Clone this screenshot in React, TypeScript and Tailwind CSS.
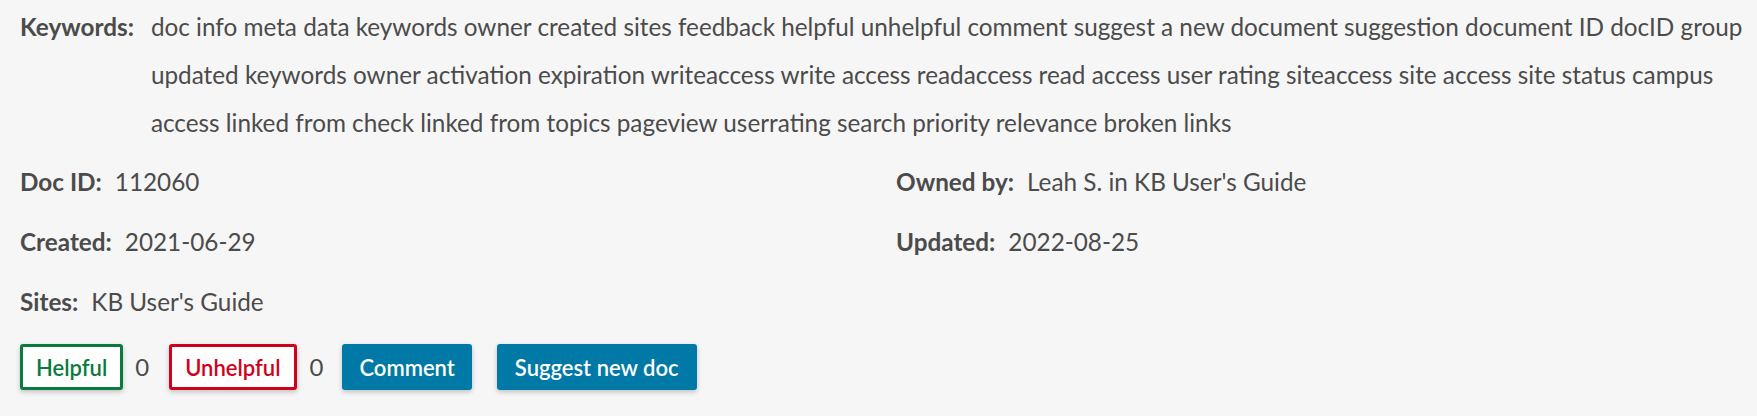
import React from "react";

const font = { fontFamily: "Lato, 'Open Sans', sans-serif" };

function Field({ label, value }: { label: string; value: string }) {
  return (
    <div className="flex items-center gap-[13px] h-[60px]">
      <span className="font-bold">{label}</span>
      <span>{value}</span>
    </div>
  );
}

const shadow = "shadow-[0_2px_5px_rgba(0,0,0,0.22)]";

export default function App() {
  return (
    <div
      className="w-[1757px] h-[416px] bg-[#f6f6f6] text-[24.3px] text-[#4b4b4b] pl-[20px] pr-[12px] pt-[3px]"
      style={font}
    >
      <div className="flex gap-[17px] leading-[48px]">
        <span className="font-bold whitespace-nowrap">Keywords:</span>
        <span>
          doc info meta data keywords owner created sites feedback helpful unhelpful comment suggest a new document suggestion document ID docID group updated keywords owner activation expiration writeaccess write access readaccess read access user rating siteaccess site access site status campus access linked from check linked from topics pageview userrating search priority relevance broken links
        </span>
      </div>
      <div className="grid grid-cols-2 gap-x-[27px] mt-[5px]">
        <Field label="Doc ID:" value="112060" />
        <Field label="Owned by:" value="Leah S. in KB User's Guide" />
        <Field label="Created:" value="2021-06-29" />
        <Field label="Updated:" value="2022-08-25" />
        <Field label="Sites:" value="KB User's Guide" />
      </div>
      <div className="flex items-center mt-[12px] text-[22px]">
        <button className={`h-[46px] px-[13px] bg-white border-[3px] border-[#0b7a3e] text-[#0b7a3e] rounded-[3px] ${shadow} font-semibold`}>
          Helpful
        </button>
        <span className="ml-[12px] text-[24px]">0</span>
        <button className={`ml-[20px] h-[46px] px-[13px] bg-white border-[3px] border-[#d0021b] text-[#d0021b] rounded-[3px] ${shadow} font-semibold`}>
          Unhelpful
        </button>
        <span className="ml-[13px] text-[24px]">0</span>
        <button className={`ml-[19px] h-[46px] px-[17px] bg-[#0079a6] text-white rounded-[3px] ${shadow} font-semibold`}>
          Comment
        </button>
        <button className={`ml-[25px] h-[46px] px-[18px] bg-[#0079a6] text-white rounded-[3px] ${shadow} font-semibold`}>
          Suggest new doc
        </button>
      </div>
    </div>
  );
}
